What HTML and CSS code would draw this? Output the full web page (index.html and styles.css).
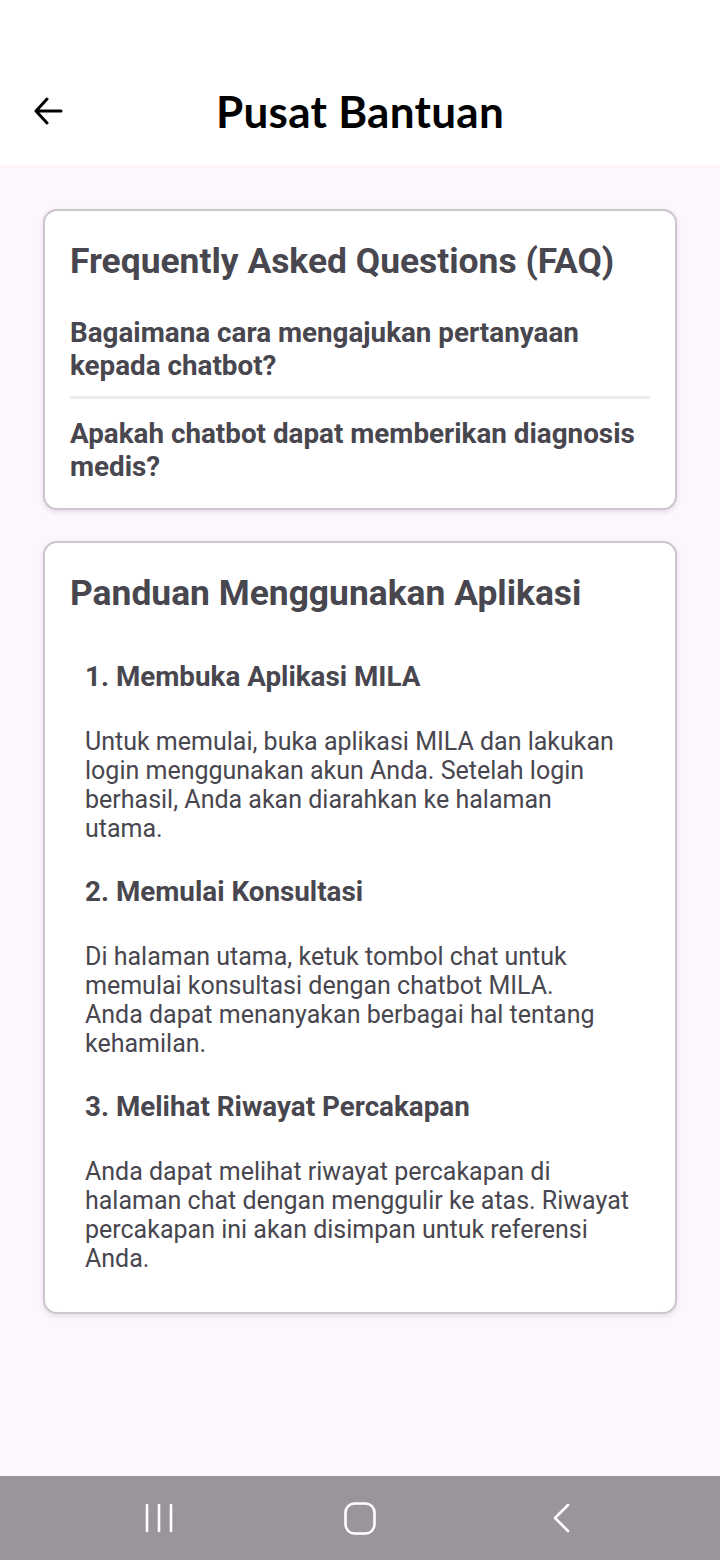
FILE: index.html
```html
<!DOCTYPE html>
<html lang="id">
<head>
<meta charset="utf-8">
<title>Pusat Bantuan</title>
<link rel="stylesheet" href="styles.css">
</head>
<body>
<div class="screen">
  <header class="appbar">
    <button class="back" aria-label="Kembali">
      <svg width="30" height="28" viewBox="0 0 30 28"><path d="M28 14H3M14 2L3 14l11 12" fill="none" stroke="#000" stroke-width="3" stroke-linecap="round" stroke-linejoin="round"/></svg>
    </button>
    <h1 class="title">Pusat Bantuan</h1>
  </header>
  <main class="content">
    <section class="card faq">
      <h2 class="card-title">Frequently Asked Questions (FAQ)</h2>
      <div class="question">Bagaimana cara mengajukan pertanyaan kepada chatbot?</div>
      <div class="divider"></div>
      <div class="question">Apakah chatbot dapat memberikan diagnosis medis?</div>
    </section>
    <section class="card guide">
      <h2 class="card-title">Panduan Menggunakan Aplikasi</h2>
      <div class="step">
        <h3 class="step-title">1. Membuka Aplikasi MILA</h3>
        <p class="step-text">Untuk memulai, buka aplikasi MILA dan lakukan login menggunakan akun Anda. Setelah login berhasil, Anda akan diarahkan ke halaman utama.</p>
      </div>
      <div class="step">
        <h3 class="step-title">2. Memulai Konsultasi</h3>
        <p class="step-text">Di halaman utama, ketuk tombol chat untuk memulai konsultasi dengan chatbot MILA.<br>Anda dapat menanyakan berbagai hal tentang kehamilan.</p>
      </div>
      <div class="step">
        <h3 class="step-title">3. Melihat Riwayat Percakapan</h3>
        <p class="step-text">Anda dapat melihat riwayat percakapan di halaman chat dengan menggulir ke atas. Riwayat percakapan ini akan disimpan untuk referensi Anda.</p>
      </div>
    </section>
  </main>
  <nav class="sysnav">
    <span class="navbtn"><svg width="28" height="30" viewBox="0 0 28 30"><path d="M2 2v26M14 2v26M26 2v26" stroke="#fff" stroke-width="2.6" stroke-linecap="round"/></svg></span>
    <span class="navbtn"><svg width="32" height="33" viewBox="0 0 32 33"><rect x="1.5" y="1.5" width="29" height="30" rx="9" fill="none" stroke="#fff" stroke-width="2.6"/></svg></span>
    <span class="navbtn"><svg width="20" height="30" viewBox="0 0 20 30"><path d="M17 2L4 15l13 13" fill="none" stroke="#fff" stroke-width="2.6" stroke-linecap="round" stroke-linejoin="round"/></svg></span>
  </nav>
</div>
</body>
</html>
```
FILE: styles.css
```css
* { box-sizing: border-box; }
html, body { margin: 0; padding: 0; }
body {
  background: #fdf6fd;
  font-family: Roboto, "Liberation Sans", sans-serif;
  color: #48464e;
}
.screen {
  min-height: 1560px;
  display: flex;
  flex-direction: column;
}
.appbar {
  height: 165px;
  background: #fff;
  display: flex;
  align-items: center;
  padding: 56px 0 0 33px;
}
.back {
  border: 0;
  background: none;
  padding: 0;
  width: 30px;
  height: 28px;
  display: flex;
}
.title {
  flex: 1;
  margin: 0 0 0 -63px;
  text-align: center;
  font-family: Lato, "Noto Sans", sans-serif;
  font-weight: 700;
  font-size: 44px;
  line-height: 52px;
  color: #000;
  letter-spacing: 0.3px;
}
.content {
  flex: 1;
  padding: 44px 43px 0 43px;
  display: flex;
  flex-direction: column;
  gap: 31px;
}
.card {
  background: #fff;
  border: 2px solid #cbc7cd;
  border-radius: 14px;
  box-shadow: 0 2px 5px rgba(80, 60, 90, 0.14);
}
.card-title {
  margin: 0;
  font-size: 35.4px;
  font-weight: 700;
  line-height: 40px;
  color: #48464e;
}
.faq {
  padding: 30px 25px 25px 25px;
}
.faq .card-title { margin-bottom: 35px; }
.question {
  font-size: 27.8px;
  font-weight: 700;
  line-height: 33px;
}
.divider {
  height: 3px;
  background: #ececec;
  margin: 14px 0 18px 0;
}
.guide {
  padding: 30px 25px 39px 25px;
}
.guide .card-title { margin-bottom: 46px; }
.step {
  padding-left: 15px;
  padding-right: 19px;
}
.step-title {
  margin: 0;
  font-size: 27.8px;
  font-weight: 700;
  line-height: 36px;
}
.step-text {
  margin: 32px 0 31px 0;
  font-size: 25px;
  line-height: 29px;
  font-weight: 400;
}
.step:last-child .step-text { margin-bottom: 0; }
.sysnav {
  height: 84px;
  background: #9a959a;
  display: flex;
  align-items: center;
  justify-content: center;
  gap: 161px;
}
.navbtn {
  width: 40px;
  display: flex;
  justify-content: center;
}
.navbtn svg { display: block; }
```
